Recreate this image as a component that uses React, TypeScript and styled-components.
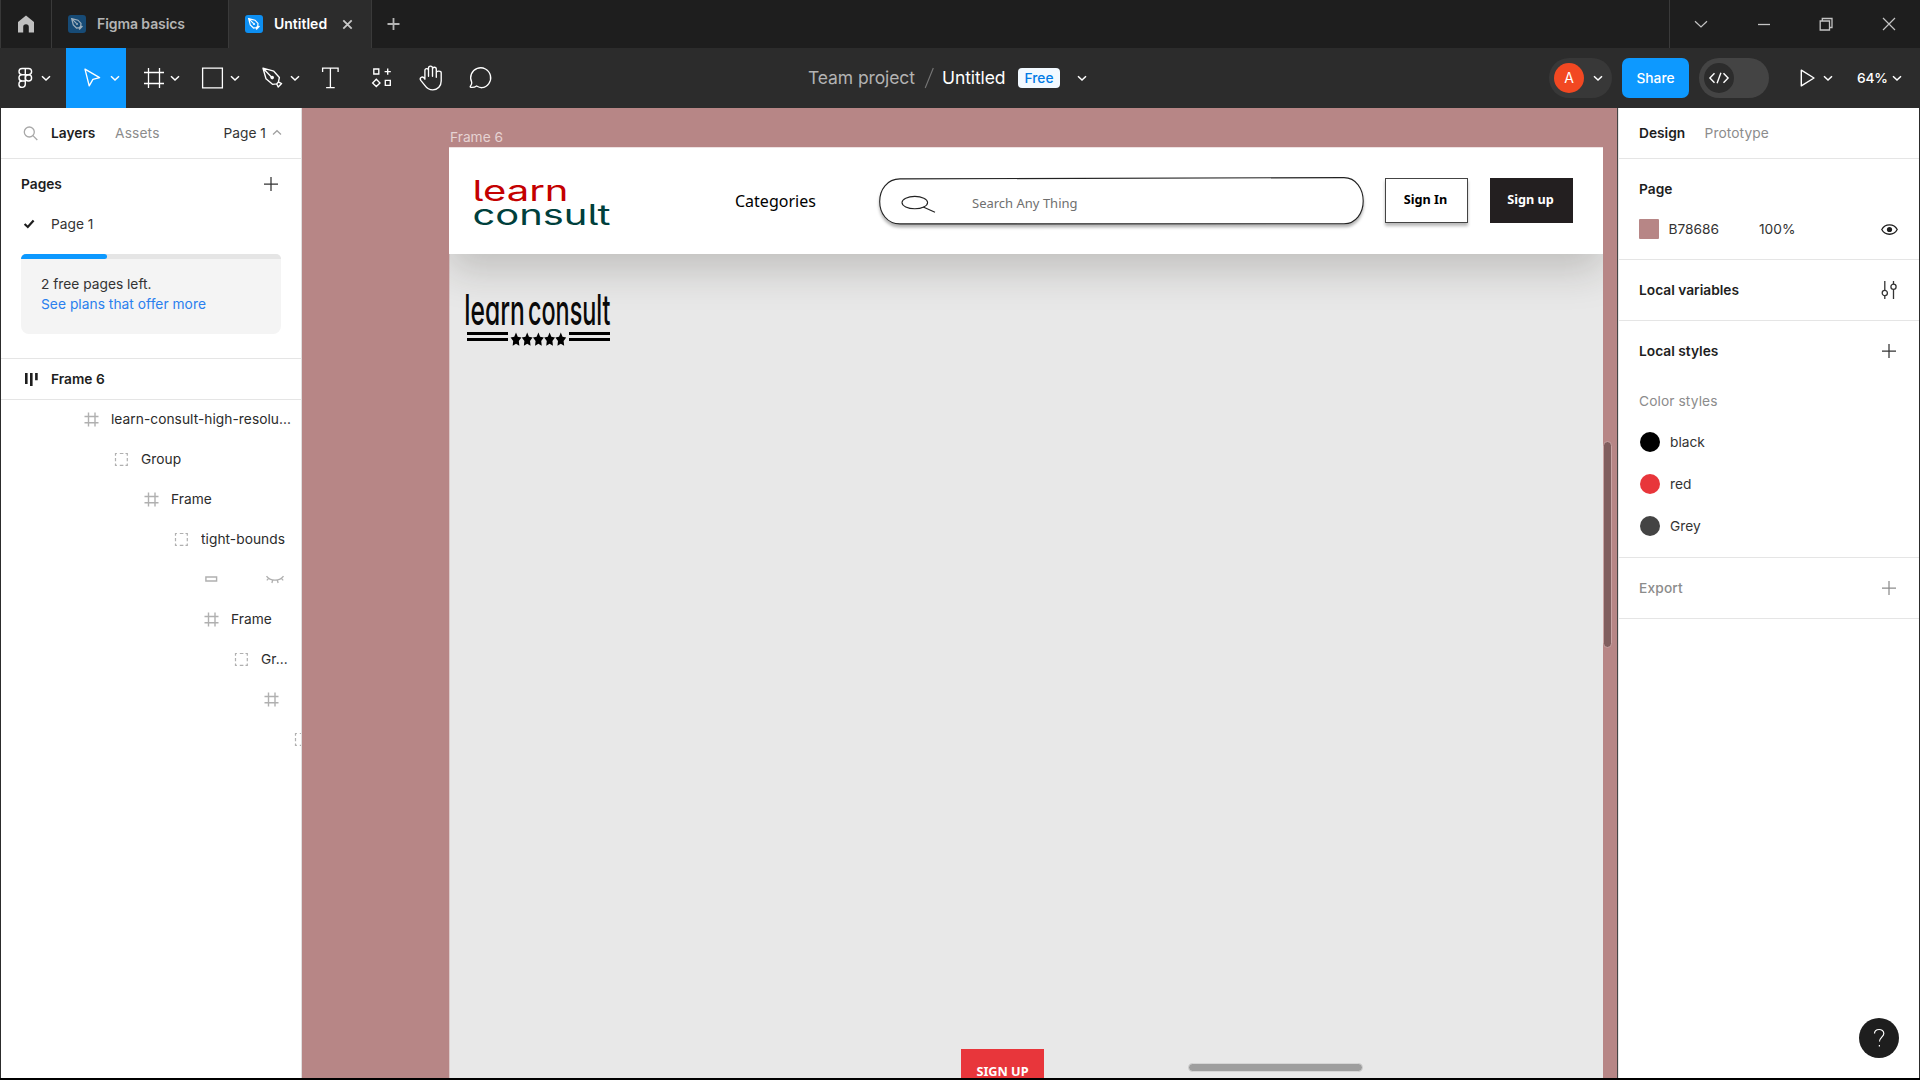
import React from "react";
import styled, { createGlobalStyle } from "styled-components";

const Global = createGlobalStyle`
  * { box-sizing: border-box; }
  body { margin: 0; background: #000; overflow: hidden; font-family: Inter, "Liberation Sans", sans-serif; }
  svg { display: block; flex: none; overflow: visible; }
`;

const Window = styled.div`
  width: 1920px;
  height: 1080px;
  display: flex;
  flex-direction: column;
  background: #2c2c2c;
  border-bottom: 2px solid #000;
  overflow: hidden;
  font-size: 13.75px;
  color: #333;
`;

const Spacer = styled.div<{ $w?: number; $h?: number }>`
  flex: ${(p) => (p.$w || p.$h ? "none" : 1)};
  width: ${(p) => (p.$w ? p.$w + "px" : "auto")};
  height: ${(p) => (p.$h ? p.$h + "px" : "auto")};
`;

/* ---------- tab strip ---------- */
const TabStrip = styled.div`
  height: 48px;
  flex: none;
  display: flex;
  background: #1e1e1e;
  border-left: 1px solid #383838;
`;

const Tab = styled.div<{ $w: number; $active?: boolean; $open?: boolean }>`
  width: ${(p) => p.$w}px;
  display: flex;
  align-items: center;
  padding-left: 16px;
  border-right: ${(p) => (p.$open ? "none" : "1px solid #3a3a3a")};
  background: ${(p) => (p.$active ? "#2c2c2c" : "transparent")};
  color: ${(p) => (p.$active ? "#fff" : "#b4b4b4")};
  font-weight: 600;
  font-size: 14px;
  white-space: nowrap;
`;

const TabBadge = styled.div<{ $dim?: boolean }>`
  width: 18px;
  height: 18px;
  border-radius: 3px;
  margin-right: 11px;
  display: flex;
  align-items: center;
  justify-content: center;
  background: ${(p) => (p.$dim ? "#174b76" : "#0d8ff2")};
  color: ${(p) => (p.$dim ? "#9fb0bd" : "#fff")};
`;

const TabName = styled.span<{ $w: number; $ls?: number }>`
  width: ${(p) => p.$w}px;
  padding-bottom: 1px;
  letter-spacing: ${(p) => p.$ls ?? 0}px;
`;

const WindowButtons = styled.div`
  display: flex;
  align-items: center;
  width: 251px;
  border-left: 1px solid #3a3a3a;
  color: #c4c4c4;
`;

const WindowButton = styled.div`
  width: 62.5px;
  height: 48px;
  display: flex;
  align-items: center;
  justify-content: center;
`;

/* ---------- toolbar ---------- */
const Toolbar = styled.div`
  height: 60px;
  flex: none;
  display: flex;
  align-items: center;
  background: #2c2c2c;
  color: #fff;
`;

const Tool = styled.div<{ $w: number; $pad: number; $gap?: number; $active?: boolean }>`
  width: ${(p) => p.$w}px;
  height: 60px;
  flex: none;
  display: flex;
  align-items: center;
  gap: ${(p) => p.$gap ?? 2}px;
  padding-left: ${(p) => p.$pad}px;
  background: ${(p) => (p.$active ? "#0d99ff" : "transparent")};
`;

const FileTitle = styled.div`
  display: flex;
  align-items: center;
  margin-left: 302px;
  font-size: 17.5px;
  white-space: nowrap;
`;

const TitlePart = styled.span<{ $w: number; $dim?: boolean }>`
  width: ${(p) => p.$w}px;
  padding-bottom: 2px;
  color: ${(p) => (p.$dim ? "#b3b3b3" : "#fff")};
  letter-spacing: -0.1px;
`;

const PlanBadge = styled.span`
  width: 42px;
  height: 20px;
  line-height: 20px;
  text-align: center;
  border-radius: 4px;
  margin-left: 10px;
  margin-right: 17px;
  background: #f2f9ff;
  color: #007be5;
  font-size: 13.75px;
  font-weight: 500;
`;

const UserPill = styled.div`
  width: 63px;
  height: 40px;
  border-radius: 20px;
  background: #383838;
  display: flex;
  align-items: center;
  padding-left: 5px;
  gap: 9px;
`;

const Avatar = styled.div`
  width: 30px;
  height: 30px;
  border-radius: 50%;
  background: #f24822;
  text-align: center;
  line-height: 30px;
  font-size: 14px;
`;

const ShareButton = styled.div`
  width: 67px;
  height: 40px;
  line-height: 40px;
  border-radius: 7px;
  margin: 0 10px;
  background: #0d99ff;
  text-align: center;
  font-size: 13.75px;
  font-weight: 500;
`;

const DevToggle = styled.div`
  width: 70px;
  height: 40px;
  border-radius: 20px;
  padding: 5px;
  background: #444;
`;

const DevKnob = styled.div`
  width: 30px;
  height: 30px;
  border-radius: 50%;
  background: #2c2c2c;
  display: flex;
  align-items: center;
  justify-content: center;
`;

const ZoomLevel = styled.span`
  width: 35px;
  font-size: 13.75px;
  font-weight: 500;
  letter-spacing: -0.2px;
`;

/* ---------- workspace ---------- */
const Workspace = styled.div`
  flex: 1;
  min-height: 0;
  display: flex;
  padding: 0 1px;
  position: relative;
`;

const SidePanel = styled.div<{ $side: "left" | "right" }>`
  width: ${(p) => (p.$side === "left" ? 301 : 302)}px;
  flex: none;
  background: #fff;
  overflow: hidden;
  border-right: ${(p) => (p.$side === "left" ? "1px solid #e0dede" : "none")};
  border-left: ${(p) => (p.$side === "right" ? "1px solid #444" : "none")};
  box-shadow: ${(p) => (p.$side === "right" ? "inset 1px 0 #e6e6e6" : "none")};
`;

const Section = styled.div<{ $h: number; $left?: number }>`
  height: ${(p) => p.$h}px;
  margin-left: ${(p) => p.$left ?? 0}px;
  border-bottom: 1px solid #e5e5e5;
`;

const Row = styled.div<{ $h: number; $pl?: number; $pr?: number; $dim?: boolean }>`
  height: ${(p) => p.$h}px;
  display: flex;
  align-items: center;
  padding-left: ${(p) => p.$pl ?? 20}px;
  padding-right: ${(p) => p.$pr ?? 20}px;
  white-space: nowrap;
  color: ${(p) => (p.$dim ? "#8c8c8c" : "inherit")};
`;

const Label = styled.span<{ $w?: number; $bold?: boolean; $medium?: boolean; $dim?: boolean; $ls?: number }>`
  width: ${(p) => (p.$w ? p.$w + "px" : "auto")};
  font-weight: ${(p) => (p.$bold ? 600 : p.$medium ? 500 : 400)};
  color: ${(p) => (p.$dim ? "#8c8c8c" : p.$bold ? "#1e1e1e" : "#333")};
  letter-spacing: ${(p) => p.$ls ?? 0}px;
`;

const Quota = styled.div`
  width: 260px;
  height: 80px;
  margin: 15px 0 0 20px;
  border-radius: 5px 5px 8px 8px;
  background: #f4f4f4;
  overflow: hidden;
`;

const QuotaTrack = styled.div`
  height: 5px;
  background: #e5e5e5;
`;

const QuotaFill = styled.div`
  width: 86px;
  height: 5px;
  border-radius: 0 3px 3px 0;
  background: #0d99ff;
`;

const QuotaText = styled.div`
  padding: 15px 20px;
  line-height: 20px;
  color: #333;
  white-space: nowrap;
`;

const PlanLink = styled.div`
  color: #2a80ee;
  letter-spacing: 0.04px;
`;

const Tree = styled.div`
  margin-top: -1px;
`;

const TreeRow = styled.div<{ $depth: number }>`
  height: 40px;
  display: flex;
  align-items: center;
  gap: 12px;
  padding-left: ${(p) => 82 + p.$depth * 30}px;
  padding-right: 8px;
  color: #b0b0b0;
`;

const TreeName = styled.span`
  min-width: 0;
  overflow: hidden;
  text-overflow: ellipsis;
  white-space: nowrap;
  color: #2b2b2b;
  letter-spacing: 0.04px;
`;

const Swatch = styled.div<{ $c: string; $round?: boolean }>`
  width: 20px;
  height: 20px;
  flex: none;
  border-radius: ${(p) => (p.$round ? "50%" : "1px")};
  background: ${(p) => p.$c};
  margin-right: ${(p) => (p.$round ? 10 : 9.5)}px;
`;

/* ---------- canvas ---------- */
const Canvas = styled.div`
  flex: 1;
  position: relative;
  overflow: hidden;
  background: #b78686;
`;

const FrameLabel = styled.div`
  position: absolute;
  left: 148px;
  top: 20px;
  line-height: 18px;
  color: #e6d3d3;
`;

const Frame = styled.div`
  position: absolute;
  left: 147px;
  top: 39px;
  width: 1154px;
  height: 931px;
  background: #e8e8e8;
  overflow: hidden;
  box-shadow: inset 1px 0 #dccaca;
  display: flex;
  flex-direction: column;
  font-family: "Noto Sans", sans-serif;
`;

const SiteHeader = styled.div`
  height: 107px;
  flex: none;
  display: flex;
  align-items: flex-start;
  background: #fff;
  box-shadow: 0 15px 40px rgba(40, 32, 24, 0.21);
  border-top: 1px solid #eee2e2;
`;

const TailedLogo = styled.svg`
  font-family: Inter, sans-serif;
  font-feature-settings: "cv05" 1;
`;

const RoundLogo = styled.svg`
  font-family: Inter, sans-serif;
  font-feature-settings: "cv11" 1;
`;

const Categories = styled.div`
  width: 144px;
  margin: 41px 0 0 123px;
  line-height: 24px;
  font-size: 16px;
  color: #000;
`;

const SearchBox = styled.div`
  width: 486px;
  height: 48px;
  margin: 29px 20px 0 0;
  display: grid;
`;

const SearchOutline = styled.svg`
  grid-area: 1 / 1;
  filter: drop-shadow(0 3px 1.5px rgba(0, 0, 0, 0.3));
`;

const SearchText = styled.span`
  grid-area: 1 / 1;
  z-index: 1;
  padding: 16px 0 0 93px;
  line-height: 20px;
  font-size: 13px;
  color: #6f6f6f;
`;

const HeaderButton = styled.div<{ $dark?: boolean }>`
  width: 83px;
  height: 45px;
  line-height: 41px;
  padding-right: 2px;
  margin: 30px 22px 0 0;
  text-align: center;
  white-space: nowrap;
  font-size: 12.7px;
  font-weight: 700;
  border: 1px solid ${(p) => (p.$dark ? "#231f20" : "#444")};
  background: ${(p) => (p.$dark ? "#231f20" : "#fff")};
  color: ${(p) => (p.$dark ? "#fff" : "#000")};
  box-shadow: ${(p) => (p.$dark ? "none" : "0 3px 3px rgba(0,0,0,.28)")};
`;

const SecondLogo = styled.div`
  margin: 36px 0 0 15px;
`;

const SignUpRed = styled.div`
  width: 83px;
  height: 45px;
  margin: auto 0 -16px 512px;
  padding-top: 11px;
  line-height: 22px;
  text-align: center;
  font-size: 12.7px;
  font-weight: 700;
  color: #fff;
  background: #e8363b;
`;

const Scrollbar = styled.div<{ $x: number; $y: number; $w: number; $h: number; $c: string; $edge: string }>`
  position: absolute;
  left: ${(p) => p.$x}px;
  top: ${(p) => p.$y}px;
  width: ${(p) => p.$w}px;
  height: ${(p) => p.$h}px;
  border-radius: 5px;
  border: 1px solid ${(p) => p.$edge};
  background: ${(p) => p.$c};
`;

const Help = styled.div`
  position: absolute;
  right: 21px;
  bottom: 20px;
  width: 40px;
  height: 40px;
  border-radius: 50%;
  background: #1e1e1e;
  display: flex;
  align-items: center;
  justify-content: center;
`;

/* ---------- icons ---------- */
type IconProps = { w: number; h?: number; sw?: number; children: React.ReactNode };
const Icon = ({ w, h = w, sw = 1.25, children }: IconProps) => (
  <svg width={w} height={h} viewBox={`0 0 ${w} ${h}`} fill="none" stroke="currentColor" strokeWidth={sw}>
    {children}
  </svg>
);

const Chevron = () => (
  <Icon w={10} sw={1.5}><path d="M1 3.2 5 7l4-3.8" /></Icon>
);

const PenGlyph = () => (
  <Icon w={12} sw={1.2}>
    <path d="M.7.7 7 2.2 10 5.4 9.7 8.2 8.3 9.6 5.5 10 2.3 7Z M.7.7 5.4 5.4" />
    <circle cx="6" cy="6" r="1.1" fill="currentColor" stroke="none" />
    <path d="M8 11.4 11.4 8" strokeWidth="1.6" />
  </Icon>
);

const HashIcon = () => (
  <Icon w={16} sw={1.4}><path d="M5.5 1.5v14M12 1.5v14M1.5 5.5h14M1.5 11.8h14" /></Icon>
);

const GroupIcon = () => (
  <Icon w={16} sw={1.2}>
    <g transform="translate(.5 .5)">
      <path d="M2 4.2V2h1.4M6.3 2h3.6M12 2h1.8v2.2M13.8 6.5v3.2M13.8 12v1.8H12M9.9 13.8H6.3M3.4 13.8H2V12M2 9.7V6.5" />
    </g>
  </Icon>
);

const RectIcon = () => (
  <Icon w={16} sw={1.4}><path d="M2.9 6h10.7v4H2.9z" /></Icon>
);

const Plus = () => (
  <Icon w={14} sw={1.25}><path d="M7 0v14M0 7h14" /></Icon>
);

const tree: { depth: number; kind: "hash" | "group" | "rect"; name?: string }[] = [
  { depth: 0, kind: "hash", name: "learn-consult-high-resolu..." },
  { depth: 1, kind: "group", name: "Group" },
  { depth: 2, kind: "hash", name: "Frame" },
  { depth: 3, kind: "group", name: "tight-bounds" },
  { depth: 4, kind: "rect" },
  { depth: 4, kind: "hash", name: "Frame" },
  { depth: 5, kind: "group", name: "Gr..." },
  { depth: 6, kind: "hash" },
  { depth: 7, kind: "group" },
];

const kinds = { hash: HashIcon, group: GroupIcon, rect: RectIcon };

const star = (cx: number, cy: number) => {
  const pts: string[] = [];
  for (let i = 0; i < 10; i++) {
    const f = i % 2 ? 0.52 : 1;
    const a = (Math.PI * i) / 5 - Math.PI / 2;
    pts.push(`${(cx + 5.7 * f * Math.cos(a)).toFixed(2)},${(cy + 7.4 * f * Math.sin(a)).toFixed(2)}`);
  }
  return pts.join(" ");
};

const Tabs = () => (
  <TabStrip>
    <Tab $w={51}>
      <svg width="18" height="18" viewBox="0 0 18 18" fill="#c0c0c0">
        <path d="M9 .5 17 7v10.5h-5.2V12a2.8 2.8 0 0 0-5.6 0v5.5H1V7Z" />
      </svg>
    </Tab>
    <Tab $w={177}>
      <TabBadge $dim><PenGlyph /></TabBadge>
      <TabName $w={100} $ls={-0.08}>Figma basics</TabName>
    </Tab>
    <Tab $w={143} $active>
      <TabBadge><PenGlyph /></TabBadge>
      <TabName $w={68}>Untitled</TabName>
      <Icon w={11} sw={1.8}><path d="M1.3 1.3 9.7 9.7M9.7 1.3 1.3 9.7" stroke="#c8c8c8" /></Icon>
    </Tab>
    <Tab $w={44} $open>
      <Icon w={12} sw={1.8}><path d="M5.5 0v12M-.5 6h12" /></Icon>
    </Tab>
    <Spacer />
    <WindowButtons>
      <WindowButton><Icon w={14} sw={1.2}><path d="M1 4.2 7 10l6-5.8" /></Icon></WindowButton>
      <WindowButton><Icon w={12} sw={1.3}><path d="M0 6.5h12" /></Icon></WindowButton>
      <WindowButton><Icon w={14} sw={1.3}><path d="M1.2 4h9.3v9H1.2zM3.3 4V1.5h9.7v9h-2.5" /></Icon></WindowButton>
      <WindowButton><Icon w={12} sw={1.2}><path d="M0 0 12 12M12 0 0 12" /></Icon></WindowButton>
    </WindowButtons>
  </TabStrip>
);

const TopToolbar = () => (
  <Toolbar>
    <Tool $w={66} $pad={10} $gap={1}>
      <Icon w={30} sw={1.4}>
        <path d="M15.3 5.5h-3.2a3 3 0 0 0 0 6.2h3.2zM15.3 5.5h3.2a3 3 0 0 1 0 6.2h-3.2zM15.3 11.7h-3.2a3.1 3.1 0 0 0 0 6.3h3.2zM15.3 18h-3.2a3.2 3.2 0 1 0 3.2 3.3z" />
        <circle cx="18.5" cy="14.9" r="3.1" />
      </Icon>
      <Chevron />
    </Tool>
    <Tool $w={60} $pad={12} $active>
      <Icon w={30} sw={1.35}><path d="M7 6.2 21.6 14.7 14.9 16.4 11.2 22.8Z" strokeLinejoin="round" /></Icon>
      <Chevron />
    </Tool>
    <Tool $w={60} $pad={12}>
      <Icon w={30} sw={1.3}><path d="M10.5 5v20M21.5 5v20M6 9.5h20M6 20.5h20" /></Icon>
      <Chevron />
    </Tool>
    <Tool $w={60} $pad={12}>
      <Icon w={30} sw={1.3}><path d="M4.6 5.1h19.8v19.8H4.6z" /></Icon>
      <Chevron />
    </Tool>
    <Tool $w={60} $pad={12}>
      <Icon w={30} sw={1.35}>
        <path d="M5 5.2 15.8 8.2 21.4 14.5 20.3 19.3 18.8 20.8 14.5 21.3 8 15.7ZM5 5.2 13.7 14.2" strokeLinejoin="round" />
        <circle cx="14.2" cy="14.6" r="1.8" fill="currentColor" stroke="none" />
        <path d="M20.3 18.8 23.6 20.6 20.2 24 18.6 20.8" strokeLinejoin="round" />
      </Icon>
      <Chevron />
    </Tool>
    <Tool $w={50} $pad={10}>
      <Icon w={30} sw={1.3}><path d="M6.6 9V5.2h15.5V9M14.4 5.2v19.4M10.1 24.6h8.6" /></Icon>
    </Tool>
    <Tool $w={50} $pad={11}>
      <Icon w={30} sw={1.35}>
        <path d="M6.8 6h5v5h-5zM20.7 5.5v6.2M17.6 8.6h6.2M18.3 17.4h5v5h-5zM9.3 16.2l3.7 3.7-3.7 3.7-3.7-3.7z" />
      </Icon>
    </Tool>
    <Tool $w={50} $pad={10}>
      <Icon w={30} sw={1.35}>
        <path d="M9.3 16V7.4c0-2.6 3.6-2.6 3.6 0V13 5c0-2.8 4-2.8 4 0v8V6c0-2.6 3.8-2.6 3.8 0v8V9.6c0-2.3 4.9-2.3 4.9 0v8.2c0 5-3.4 8.9-8.4 8.9-3.8 0-6-1.7-8.2-4.8l-3.8-4.8c-1.7-2.3 1.2-4.4 3.1-2.5z" strokeLinejoin="round" transform="translate(-.4 .2)" />
      </Icon>
    </Tool>
    <Tool $w={50} $pad={10}>
      <Icon w={30} sw={1.35}>
        <path d="M5 24.4c-.8 0-1-.6-.6-1.2 1.2-1.4 1.6-2.6 1.3-4A10 10 0 1 1 15.8 24.7c-2.2 0-3.7-.8-5.2-1.7-1.3 1-3.3 1.6-5.6 1.4Z" strokeLinejoin="round" />
      </Icon>
    </Tool>
    <FileTitle>
      <TitlePart $w={116} $dim>Team project</TitlePart>
      <Icon w={18} h={22} sw={1.1}><path d="M1.2 21 9.3 1" stroke="#777" /></Icon>
      <TitlePart $w={66}>Untitled</TitlePart>
      <PlanBadge>Free</PlanBadge>
      <Chevron />
    </FileTitle>
    <Spacer />
    <UserPill><Avatar>A</Avatar><Chevron /></UserPill>
    <ShareButton>Share</ShareButton>
    <DevToggle>
      <DevKnob>
        <Icon w={20} h={12} sw={1.4}><path d="M5.5 1.2.9 6l4.6 4.8M14.5 1.2 19.1 6l-4.6 4.8M11.9.8 8.1 11.2" /></Icon>
      </DevKnob>
    </DevToggle>
    <Spacer $w={31} />
    <Icon w={23} h={18} sw={1.4}><path d="M1.3 1.2 14 9 1.3 16.8Z" strokeLinejoin="round" /></Icon>
    <Chevron />
    <Spacer $w={24} />
    <ZoomLevel>64%</ZoomLevel>
    <Chevron />
    <Spacer $w={18} />
  </Toolbar>
);

const LayersPanel = () => (
  <SidePanel $side="left">
    <Section $h={51}>
      <Row $h={50} $pl={22} $pr={19}>
        <Icon w={14} sw={1.3}><g stroke="#a8a8a8"><circle cx="6.3" cy="6" r="5" /><path d="M9.9 9.6 14.3 14" /></g></Icon>
        <Spacer $w={14} />
        <Label $w={64} $bold>Layers</Label>
        <Label $w={108.5} $dim $ls={0.15}>Assets</Label>
        <Label $w={48.5}>Page 1</Label>
        <Icon w={10} sw={1.2}><path d="M1 6.5 5 2.7l4 3.8" stroke="#a0a0a0" /></Icon>
      </Row>
    </Section>
    <Section $h={200}>
      <Row $h={50} $pr={23}>
        <Label $bold>Pages</Label>
        <Spacer />
        <Plus />
      </Row>
      <Row $h={30} $pl={23}>
        <Icon w={12} sw={2.2}><path d="M.6 6 3.8 9 9.6 2.5" stroke="#1e1e1e" /></Icon>
        <Spacer $w={15} />
        <Label>Page 1</Label>
      </Row>
      <Quota>
        <QuotaTrack><QuotaFill /></QuotaTrack>
        <QuotaText>
          2 free pages left.
          <PlanLink>See plans that offer more</PlanLink>
        </QuotaText>
      </Quota>
    </Section>
    <Section $h={41}>
      <Row $h={40} $pl={23}>
        <Icon w={14} sw={2.6}><path d="M2.3 1v11M7.3 1v13M12.4 1v7.2" stroke="#1e1e1e" /></Icon>
        <Spacer $w={13} />
        <Label $bold>Frame 6</Label>
      </Row>
    </Section>
    <Tree>
      {tree.map((n, i) => {
        const K = kinds[n.kind];
        return (
          <TreeRow key={i} $depth={n.depth}>
            <K />
            {n.name && <TreeName>{n.name}</TreeName>}
            {n.kind === "rect" && (
              <>
                <Spacer $w={23} />
                <Icon w={18} h={9} sw={1.3}>
                  <path d="M.5 1.2C4 6.4 14 6.4 17.5 1.2M2.7 3.4.8 5.4M6.7 5 5.9 8M11.3 5l.8 3M15.3 3.4l1.9 2" />
                </Icon>
              </>
            )}
          </TreeRow>
        );
      })}
    </Tree>
  </SidePanel>
);

const CanvasArea = () => (
  <Canvas>
    <FrameLabel>Frame 6</FrameLabel>
    <Frame>
      <SiteHeader>
        <TailedLogo width="163" height="106" viewBox="0 0 163 106">
          <text x="23.5" y="52.6" fontSize="28" fill="#c40000" textLength="96" lengthAdjust="spacingAndGlyphs">learn</text>
          <text x="23.5" y="76.5" fontSize="28" fill="#003f3c" textLength="138" lengthAdjust="spacingAndGlyphs">consult</text>
        </TailedLogo>
        <Categories>Categories</Categories>
        <SearchBox>
          <SearchOutline width="486" height="48" viewBox="0 0 486 48" fill="#fff" stroke="#222" strokeWidth="1.1">
            <path d="M21 1.9 465 .6C477 .6 484.2 12 484.2 24S477 46.6 465 46.8L21 46.9C8 46.9.7 36 .7 24.4S8 1.9 21 1.9Z" />
            <ellipse cx="35.8" cy="25.6" rx="12.8" ry="6.2" />
            <path d="M44.2 30 56 35.2" />
          </SearchOutline>
          <SearchText>Search Any Thing</SearchText>
        </SearchBox>
        <HeaderButton>Sign In</HeaderButton>
        <HeaderButton $dark>Sign up</HeaderButton>
      </SiteHeader>
      <SecondLogo>
        <RoundLogo width="150" height="60" viewBox="464 290 150 60">
          <text x="464.3" y="324.6" fontSize="42" fontWeight="500" fill="#0a0a0a" textLength="60.5" lengthAdjust="spacingAndGlyphs">learn</text>
          <text x="528" y="324.6" fontSize="42" fontWeight="500" fill="#0a0a0a" textLength="82.5" lengthAdjust="spacingAndGlyphs">consult</text>
          <path d="M467 332h41v3h-41zM467 338h41v3h-41zM569 332h41v3h-41zM569 338h41v3h-41z" />
          {[516, 527.2, 538.4, 549.6, 560.8].map((x) => <polygon key={x} points={star(x, 339.8)} />)}
        </RoundLogo>
      </SecondLogo>
      <SignUpRed>SIGN UP</SignUpRed>
    </Frame>
    <Scrollbar $x={1301} $y={333} $w={9} $h={207} $c="#805e5e" $edge="#c9a4a4" />
    <Scrollbar $x={886} $y={955} $w={175} $h={9} $c="#9e9e9e" $edge="#d5d5d5" />
  </Canvas>
);

const DesignPanel = () => (
  <SidePanel $side="right">
    <Section $h={51} $left={1}>
      <Row $h={50}>
        <Label $w={65.5} $bold>Design</Label>
        <Label $dim $ls={0.1}>Prototype</Label>
      </Row>
    </Section>
    <Section $h={101} $left={1}>
      <Spacer $h={9} />
      <Row $h={42}><Label $bold>Page</Label></Row>
      <Row $h={38} $pr={21.5}>
        <Swatch $c="#b78686" />
        <Label $w={90.5}>B78686</Label>
        <Label>100%</Label>
        <Spacer />
        <Icon w={17} h={11} sw={1.3}>
          <path d="M.8 5.5C4-.8 13-.8 16.2 5.5 13 11.8 4 11.8.8 5.5Z" stroke="#1e1e1e" />
          <circle cx="8.5" cy="5.5" r="2.6" fill="#1e1e1e" stroke="none" />
        </Icon>
      </Row>
    </Section>
    <Section $h={61} $left={1}>
      <Row $h={60} $pr={22}>
        <Label $bold>Local variables</Label>
        <Spacer />
        <Icon w={16} h={18} sw={1.3}>
          <path d="M3.8 0v9.4M3.8 14.6V18M12.5 0v3.2M12.5 8.4V18" />
          <circle cx="3.8" cy="12" r="2.6" /><circle cx="12.5" cy="5.8" r="2.6" />
        </Icon>
      </Row>
    </Section>
    <Section $h={237} $left={1}>
      <Row $h={60} $pr={23}><Label $bold>Local styles</Label><Spacer /><Plus /></Row>
      <Row $h={40}><Label $dim $ls={0.1}>Color styles</Label></Row>
      <Row $h={42} $pl={21}><Swatch $round $c="#000" /><Label>black</Label></Row>
      <Row $h={42} $pl={21}><Swatch $round $c="#e8363b" /><Label>red</Label></Row>
      <Row $h={42} $pl={21}><Swatch $round $c="#444" /><Label>Grey</Label></Row>
    </Section>
    <Section $h={61} $left={1}>
      <Row $h={60} $pr={23} $dim>
        <Label $dim $medium $ls={0.15}>Export</Label><Spacer /><Plus />
      </Row>
    </Section>
  </SidePanel>
);

export default function App() {
  return (
    <Window>
      <Global />
      <Tabs />
      <TopToolbar />
      <Workspace>
        <LayersPanel />
        <CanvasArea />
        <DesignPanel />
        <Help>
          <Icon w={14} h={20} sw={1.2}>
            <g stroke="#fff"><path d="M2.5 5.6C2.5.2 11.8.2 11.8 5.4c0 3.5-4.3 4-4.3 8.1" /><path d="M7.4 17v1.5" /></g>
          </Icon>
        </Help>
      </Workspace>
    </Window>
  );
}
